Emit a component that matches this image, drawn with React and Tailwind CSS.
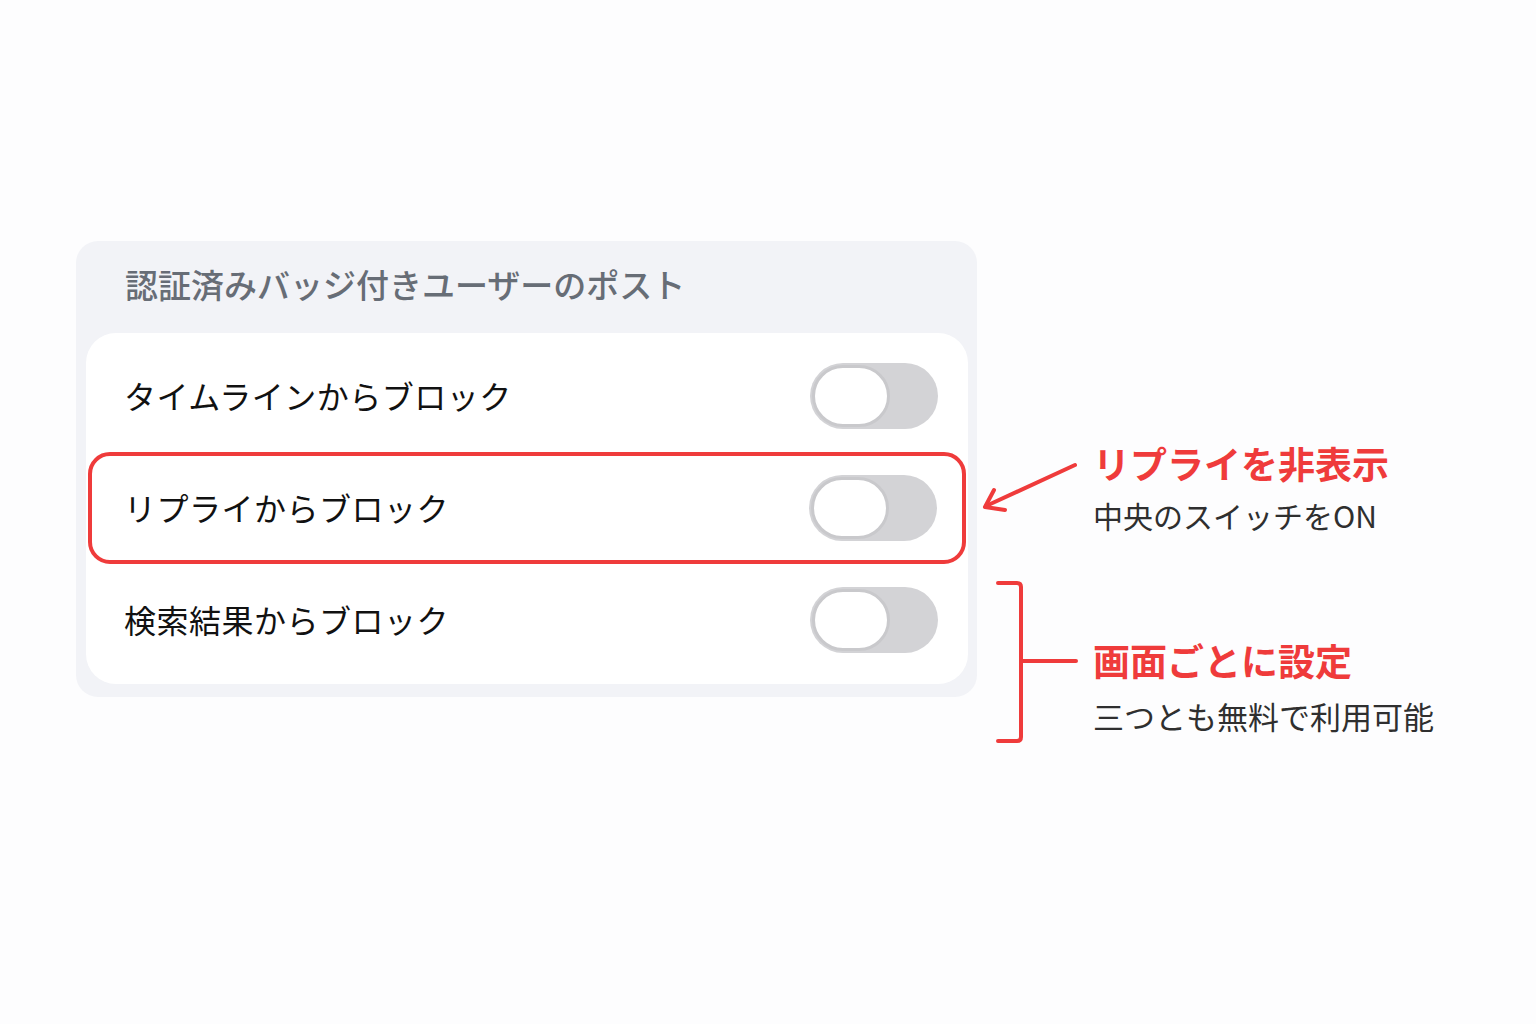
import React from "react";

const font = { fontFamily: '"Noto Sans CJK JP", "Noto Sans", sans-serif' };

function Toggle() {
  return (
    <div className="w-[128px] h-[66px] rounded-full bg-[#d3d3d6] flex items-center pl-[2px] shrink-0">
      <div className="w-[78px] h-[62px] rounded-full bg-white border-[3px] border-[#c9c9cc]" />
    </div>
  );
}

function Row({ label, highlight }) {
  if (highlight) {
    return (
      <div className="h-[112px] mx-[2px] border-4 border-[#ef3b3b] rounded-[22px] flex items-center justify-between pl-[32px] pr-[25px]">
        <span className="text-[32px] leading-[44px] tracking-[0.5px] text-[#111111] -mt-[2px]">{label}</span>
        <Toggle />
      </div>
    );
  }
  return (
    <div className="h-[112px] flex items-center justify-between pl-[38px] pr-[30px]">
      <span className="text-[32px] leading-[44px] tracking-[0.5px] text-[#111111] -mt-[2px]">{label}</span>
      <Toggle />
    </div>
  );
}

export default function App() {
  return (
    <div className="w-[1536px] h-[1024px] bg-[#fdfdfe]" style={font}>
      <div className="flex items-start pt-[241px] pl-[76px]">
        <div className="w-[901px] bg-[#f2f3f7] rounded-[22px] pt-[20px] pb-[13px] pl-[10px] pr-[9px] flex flex-col">
          <div className="pl-[39px] text-[33px] leading-[46px] text-[#676d76] font-medium">
            認証済みバッジ付きユーザーのポスト
          </div>
          <div className="mt-[26px] bg-white rounded-[30px] pt-[7px] pb-[8px] flex flex-col">
            <Row label="タイムラインからブロック" />
            <Row label="リプライからブロック" highlight />
            <Row label="検索結果からブロック" />
          </div>
        </div>
        <div className="flex">
          <svg width="116" height="510" viewBox="0 0 116 510" className="shrink-0">
            <g stroke="#ef3b3b" strokeWidth="4" fill="none" strokeLinecap="round" strokeLinejoin="round">
              <line x1="98" y1="224" x2="9" y2="265" />
              <polyline points="17,249 8,266 28,269" />
              <path d="M21 342 H40 Q44 342 44 346 V496 Q44 500 40 500 H21" />
              <line x1="44" y1="420" x2="99" y2="420" />
            </g>
          </svg>
          <div className="flex flex-col pt-[197px]">
            <div className="text-[37px] leading-[50px] font-bold text-[#ef3b3b] whitespace-nowrap">リプライを非表示</div>
            <div className="mt-[6px] text-[30px] leading-[42px] text-[#2f2f2f] whitespace-nowrap">中央のスイッチをON</div>
            <div className="mt-[99px] text-[37px] leading-[50px] font-bold text-[#ef3b3b] whitespace-nowrap">画面ごとに設定</div>
            <div className="mt-[10px] text-[31px] leading-[42px] text-[#2f2f2f] whitespace-nowrap">三つとも無料で利用可能</div>
          </div>
        </div>
      </div>
    </div>
  );
}
